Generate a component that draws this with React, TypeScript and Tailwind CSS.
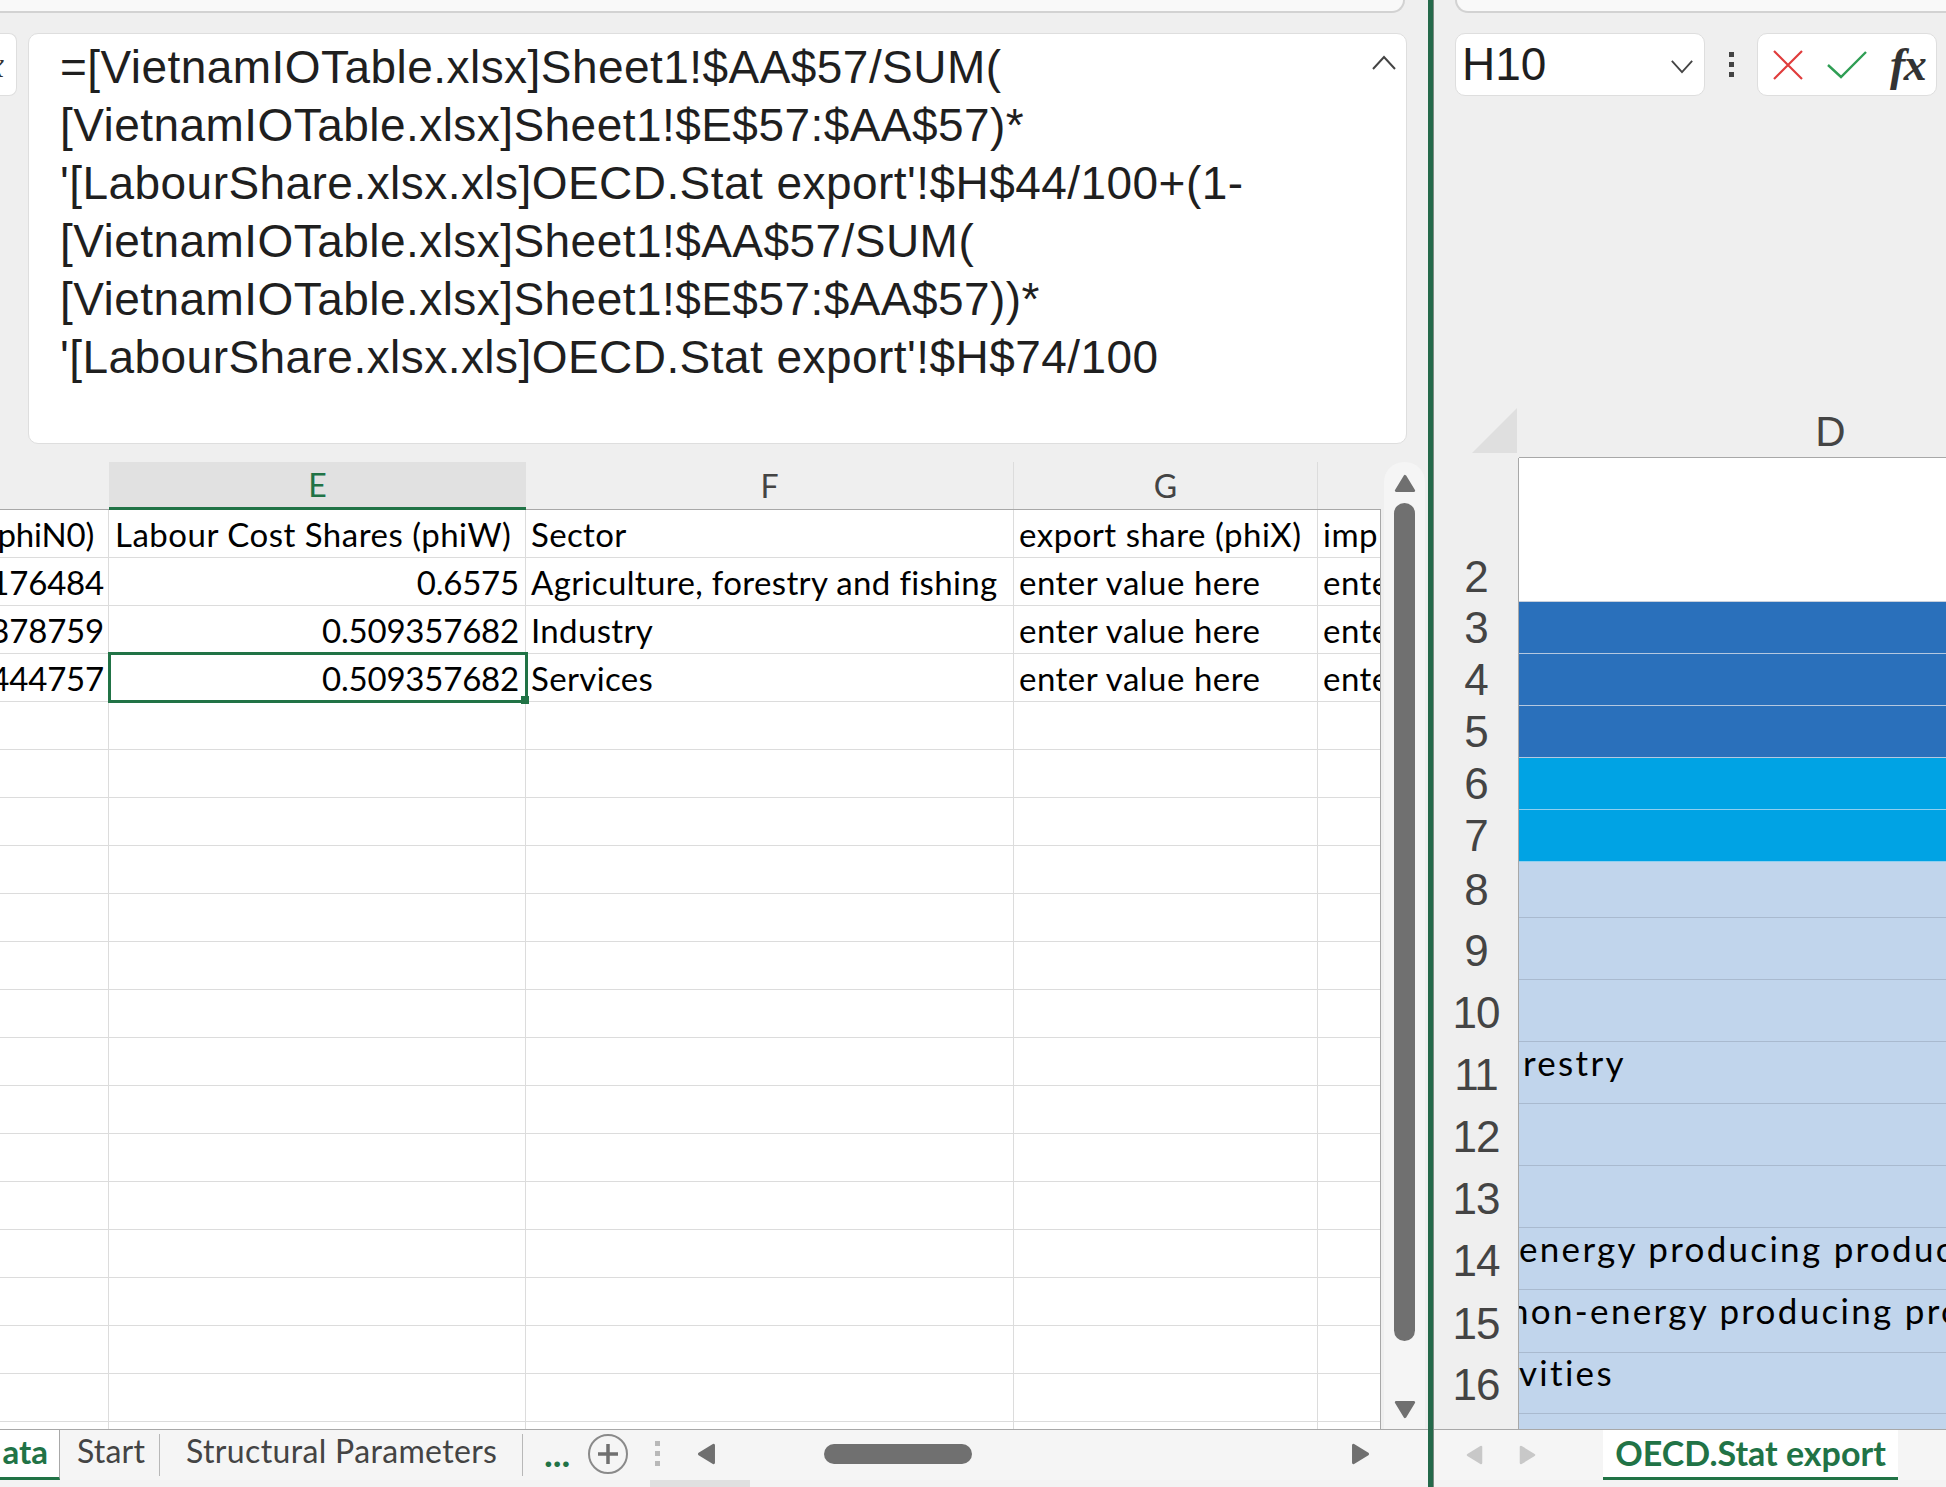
import React from 'react';

const formula = [
  '=[VietnamIOTable.xlsx]Sheet1!$AA$57/SUM(',
  '[VietnamIOTable.xlsx]Sheet1!$E$57:$AA$57)*',
  "'[LabourShare.xlsx.xls]OECD.Stat export'!$H$44/100+(1-",
  '[VietnamIOTable.xlsx]Sheet1!$AA$57/SUM(',
  '[VietnamIOTable.xlsx]Sheet1!$E$57:$AA$57))*',
  "'[LabourShare.xlsx.xls]OECD.Stat export'!$H$74/100",
];

const dataRows = [
  ['phiN0)', 'Labour Cost Shares (phiW)', 'Sector', 'export share (phiX)', 'imp'],
  ['176484', '0.6575', 'Agriculture, forestry and fishing', 'enter value here', 'ente'],
  ['378759', '0.509357682', 'Industry', 'enter value here', 'ente'],
  ['444757', '0.509357682', 'Services', 'enter value here', 'ente'],
];

const rightRows = [
  { label: '2', h: 'h-[144px]', bg: 'bg-white', line: 'border-[#c8d0dc]', align: 'items-end pb-[1px]', text: '', textClass: '' },
  { label: '3', h: 'h-[52px]', bg: 'bg-[#2a70bb]', line: 'border-[#b4c8e0]', align: 'items-center', text: '', textClass: '' },
  { label: '4', h: 'h-[52px]', bg: 'bg-[#2a70bb]', line: 'border-[#b4c8e0]', align: 'items-center', text: '', textClass: '' },
  { label: '5', h: 'h-[52px]', bg: 'bg-[#2a70bb]', line: 'border-[#b4c8e0]', align: 'items-center', text: '', textClass: '' },
  { label: '6', h: 'h-[52px]', bg: 'bg-[#00a3e4]', line: 'border-[#8fd0f0]', align: 'items-center', text: '', textClass: '' },
  { label: '7', h: 'h-[52px]', bg: 'bg-[#00a3e4]', line: 'border-[#8fd0f0]', align: 'items-center', text: '', textClass: '' },
  { label: '8', h: 'h-[56px]', bg: 'bg-[#c1d5ec]', line: 'border-[#a9bacf]', align: 'items-center', text: '', textClass: '' },
  { label: '9', h: 'h-[62px]', bg: 'bg-[#c1d5ec]', line: 'border-[#a9bacf]', align: 'items-center pt-[3px]', text: '', textClass: '' },
  { label: '10', h: 'h-[62px]', bg: 'bg-[#c1d5ec]', line: 'border-[#a9bacf]', align: 'items-center pt-[4px]', text: '', textClass: '' },
  { label: '11', h: 'h-[62px]', bg: 'bg-[#c1d5ec]', line: 'border-[#a9bacf]', align: 'items-center pt-[4px]', text: 'restry', textClass: 'ml-[4px]' },
  { label: '12', h: 'h-[62px]', bg: 'bg-[#c1d5ec]', line: 'border-[#a9bacf]', align: 'items-center pt-[4px]', text: '', textClass: '' },
  { label: '13', h: 'h-[62px]', bg: 'bg-[#c1d5ec]', line: 'border-[#a9bacf]', align: 'items-center pt-[4px]', text: '', textClass: '' },
  { label: '14', h: 'h-[62px]', bg: 'bg-[#c1d5ec]', line: 'border-[#a9bacf]', align: 'items-center pt-[4px]', text: 'energy producing products', textClass: 'ml-0' },
  { label: '15', h: 'h-[63px]', bg: 'bg-[#c1d5ec]', line: 'border-[#a9bacf]', align: 'items-center pt-[4px]', text: 'non-energy producing products', textClass: '-ml-[10px]' },
  { label: '16', h: 'h-[61px]', bg: 'bg-[#c1d5ec]', line: 'border-[#a9bacf]', align: 'items-center pt-[3px]', text: 'vities', textClass: 'ml-0' },
];

const colClass = ['w-[109px]', 'w-[417px]', 'w-[488px]', 'w-[304px]', 'flex-1'];

const Triangle = ({ dir, color, className }: { dir: 'up' | 'down' | 'left' | 'right'; color: string; className: string }) => {
  const pts = {
    up: '10,3 18,16 2,16',
    down: '10,17 18,4 2,4',
    left: '3,10 16,2 16,18',
    right: '17,10 4,2 4,18',
  }[dir];
  return (
    <svg viewBox="0 0 20 20" className={className}>
      <polygon points={pts} fill={color} stroke={color} strokeWidth="2.5" strokeLinejoin="round" />
    </svg>
  );
};

const Dots = ({ color }: { color: string }) => (
  <div className="flex flex-col gap-[5px]">
    <div className={`w-[5px] h-[5px] ${color}`} />
    <div className={`w-[5px] h-[5px] ${color}`} />
    <div className={`w-[5px] h-[5px] ${color}`} />
  </div>
);

const LeftPane = () => (
  <div className="w-[1428px] h-full flex flex-col shrink-0 overflow-hidden">
    <div className="w-[1405px] h-[13px] bg-[#f9f9f9] border-b-2 border-r-2 border-[#d2d2d2] rounded-br-[14px]" />

    <div className="flex mt-[20px] h-[411px] gap-[11px]">
      <div className="w-[17px] h-[63px] bg-white border border-l-0 border-[#dedede] rounded-r-[8px] overflow-hidden flex items-center justify-end pr-[12px]">
        <span className="font-['Liberation_Serif'] italic text-[36px] text-[#333] whitespace-nowrap">fx</span>
      </div>
      <div className="w-[1379px] h-full bg-white border border-[#dedede] rounded-[10px] pl-[31px] pt-[4px] flex justify-between">
        <div className="font-['Liberation_Sans',sans-serif] text-[46px] leading-[58px] text-[#1f1f1f] tracking-[0.45px]">
          {formula.map((line) => (
            <div key={line} className="whitespace-pre">{line}</div>
          ))}
        </div>
        <svg viewBox="0 0 26 16" className="w-[26px] h-[16px] mt-[17px] mr-[9px]" fill="none" stroke="#444" strokeWidth="2">
          <polyline points="2,14 13,2 24,14" />
        </svg>
      </div>
    </div>

    <div className="flex mt-[18px] h-[967px]">
      <div className="w-[1381px] h-full flex flex-col overflow-hidden font-['Lato',sans-serif]">
        <div className="flex h-[48px] shrink-0 border-b border-[#a8a8a8] text-[32px] text-[#444]">
          <div className="w-[109px]" />
          <div className="w-[417px] h-[48px] bg-[#e1e1e1] border-b-[3px] border-[#217346] text-[#217346] flex items-center justify-center">E</div>
          <div className="w-[488px] border-r border-[#dcdcdc] flex items-center justify-center">F</div>
          <div className="w-[304px] border-r border-[#dcdcdc] flex items-center justify-center">G</div>
          <div className="flex-1" />
        </div>
        <div className="flex-1 bg-white border-r border-[#a8a8a8] overflow-hidden text-[33px] text-black">
          {Array.from({ length: 20 }).map((_, r) => (
            <div key={r} className="flex h-[48px]">
              {colClass.map((w, c) => {
                const val = dataRows[r]?.[c] ?? '';
                const numeric = c === 1 && r > 0;
                const clipLeft = c === 0;
                const tracking = numeric || clipLeft ? 'justify-end tracking-[-0.2px]' : c === 2 ? 'justify-start tracking-[0.35px]' : 'justify-start tracking-[0.5px]';
                const pad = clipLeft && r === 0 ? 'pr-[14px]' : numeric ? 'pr-[6px]' : clipLeft ? 'pr-[4px]' : c === 1 ? 'pl-[6px]' : 'pl-[5px]';
                return (
                  <div
                    key={c}
                    className={`${w} h-full pt-[2px] border-b border-[#dcdcdc] ${c < 4 ? 'border-r' : ''} border-r-[#dcdcdc] flex items-center overflow-hidden whitespace-nowrap relative ${tracking} ${pad}`}
                  >
                    {val}
                  </div>
                );
              })}
            </div>
          ))}
        </div>
      </div>
      <div className="flex-1 h-full relative flex justify-center">
        <div className="w-[41px] h-full bg-[#f5f5f5] rounded-t-[20px] flex flex-col items-center pt-[11px]">
          <Triangle dir="up" color="#707070" className="w-[22px] h-[22px]" />
          <div className="w-[21px] h-[838px] mt-[8px] bg-[#707070] rounded-[11px]" />
          <Triangle dir="down" color="#707070" className="w-[22px] h-[22px] mt-[57px]" />
        </div>
      </div>
    </div>

    <div className="flex items-center h-[51px] shrink-0 bg-[#f5f5f5] border-t border-[#a8a8a8] font-['Lato',sans-serif]">
      <div className="w-[60px] h-full bg-white border-r border-[#a8a8a8] border-b-[3px] border-b-[#217346] flex items-center justify-end pr-[11px] pb-[3px] text-[33px] font-bold text-[#217346]">ata</div>
      <div className="w-[100px] h-[42px] border-r border-[#b8b8b8] flex items-center pl-[17px] pb-[8px] text-[32px] tracking-[0.2px] text-[#444]">Start</div>
      <div className="w-[363px] h-[42px] border-r border-[#b8b8b8] flex items-center pl-[26px] pb-[8px] text-[32px] tracking-[0.35px] text-[#444] whitespace-nowrap">Structural Parameters</div>
      <div className="w-[65px] pl-[21px] text-[37px] leading-none font-bold text-[#217346] pb-[6px]">...</div>
      <div className="w-[40px] h-[40px] mb-[3px] rounded-full border-2 border-[#8a8a8a] flex items-center justify-center">
        <svg viewBox="0 0 22 22" className="w-[22px] h-[22px]" fill="none" stroke="#707070" strokeWidth="3.5">
          <path d="M11 1v20M1 11h20" />
        </svg>
      </div>
      <div className="ml-[27px] mb-[3px]"><Dots color="bg-[#b8b8b8]" /></div>
      <Triangle dir="left" color="#707070" className="w-[22px] h-[22px] ml-[36px] mb-[3px]" />
      <div className="w-[148px] h-[20px] ml-[106px] mb-[3px] bg-[#707070] rounded-[10px]" />
      <Triangle dir="right" color="#707070" className="w-[22px] h-[22px] ml-[377px] mb-[3px]" />
    </div>
    <div className="flex-1 bg-[#f3f3f3] pl-[650px]">
      <div className="w-[100px] h-full bg-[#e0e0e0]" />
    </div>
  </div>
);

const RightPane = () => (
  <div className="flex-1 h-full flex flex-col overflow-hidden">
    <div className="ml-[21px] h-[13px] bg-[#f9f9f9] border-b-2 border-l-2 border-[#d2d2d2] rounded-bl-[14px]" />

    <div className="flex items-center mt-[20px] h-[63px] ml-[21px]">
      <div className="w-[250px] h-full bg-white border border-[#dedede] rounded-[10px] pl-[6px] pr-[10px] flex items-center justify-between">
        <span className="font-['Liberation_Sans',sans-serif] text-[46px] text-[#1f1f1f]">H10</span>
        <svg viewBox="0 0 26 16" className="w-[24px] h-[15px] mt-[4px]" fill="none" stroke="#444" strokeWidth="2">
          <polyline points="2,2 13,14 24,2" />
        </svg>
      </div>
      <div className="w-[52px] flex justify-center"><Dots color="bg-[#444]" /></div>
      <div className="w-[180px] h-full bg-white border border-[#dedede] rounded-[10px] flex items-center pl-[15px]">
        <svg viewBox="0 0 30 30" className="w-[30px] h-[30px]" fill="none" stroke="#e03c3c" strokeWidth="2.2">
          <path d="M1 1l28 28M29 1L1 29" />
        </svg>
        <svg viewBox="0 0 40 28" className="w-[40px] h-[28px] ml-[24px]" fill="none" stroke="#2f9e54" strokeWidth="2.4">
          <polyline points="1,14 14,26 39,1" />
        </svg>
        <span className="ml-[23px] font-['Liberation_Serif',serif] italic font-bold text-[46px] leading-none text-[#333] tracking-[-1.5px]">fx</span>
      </div>
    </div>

    <div className="mt-[312px] h-[1021px] flex flex-col overflow-hidden">
      <div className="flex h-[50px] shrink-0">
        <div className="w-[85px] h-full flex justify-end items-start pr-[2px]">
          <svg viewBox="0 0 45 45" className="w-[45px] h-[45px]">
            <polygon points="45,0 45,45 0,45" fill="#dfdfdf" />
          </svg>
        </div>
        <div className="flex-1 border-b border-[#a8a8a8] flex items-center justify-center pl-[196px] font-['Liberation_Sans',sans-serif] text-[42px] text-[#444] pb-[2px]">D</div>
      </div>
      {rightRows.map((row) => (
        <div key={row.label} className={`flex ${row.h} shrink-0`}>
          <div className={`w-[85px] h-full flex ${row.align} justify-center border-r border-[#a8a8a8] font-['Liberation_Sans',sans-serif] text-[44px] leading-[48px] text-[#444] tracking-[-1px]`}>
            {row.label}
          </div>
          <div className={`flex-1 h-full ${row.bg} border-b ${row.line} overflow-hidden flex items-center whitespace-nowrap font-['Lato',sans-serif] text-[35px] text-black tracking-[2.3px] pb-[21px]`}>
            <span className={row.textClass}>{row.text}</span>
          </div>
        </div>
      ))}
      <div className="flex flex-1">
        <div className="w-[85px] border-r border-[#a8a8a8]" />
        <div className="flex-1 bg-[#c1d5ec]" />
      </div>
    </div>

    <div className="flex items-center h-[51px] shrink-0 bg-[#f5f5f5] border-t border-[#a8a8a8]">
      <Triangle dir="left" color="#c8c8c8" className="w-[20px] h-[20px] ml-[31px]" />
      <Triangle dir="right" color="#c8c8c8" className="w-[20px] h-[20px] ml-[32px]" />
      <div className="w-[295px] h-full ml-[66px] bg-white border-b-[3px] border-[#217346] flex items-center justify-center pb-[3px] font-['Lato',sans-serif] font-bold text-[34px] text-[#217346] whitespace-nowrap">
        OECD.Stat export
      </div>
    </div>
    <div className="flex-1 bg-[#f3f3f3]" />
  </div>
);

export default function App() {
  return (
    <div className="relative w-[1946px] h-[1487px] flex bg-[#efefef] overflow-hidden">
      <LeftPane />
      <div className="w-[6px] h-full bg-[#24694a] border-r border-[#7a8a80] shrink-0" />
      <RightPane />
      {/* selected cell border */}
      <div className="absolute left-[108px] top-[652px] w-[420px] h-[51px] border-[3px] border-[#217346]">
        <div className="absolute right-[-4px] bottom-[-4px] w-[8px] h-[8px] bg-[#217346]" />
      </div>
    </div>
  );
}
